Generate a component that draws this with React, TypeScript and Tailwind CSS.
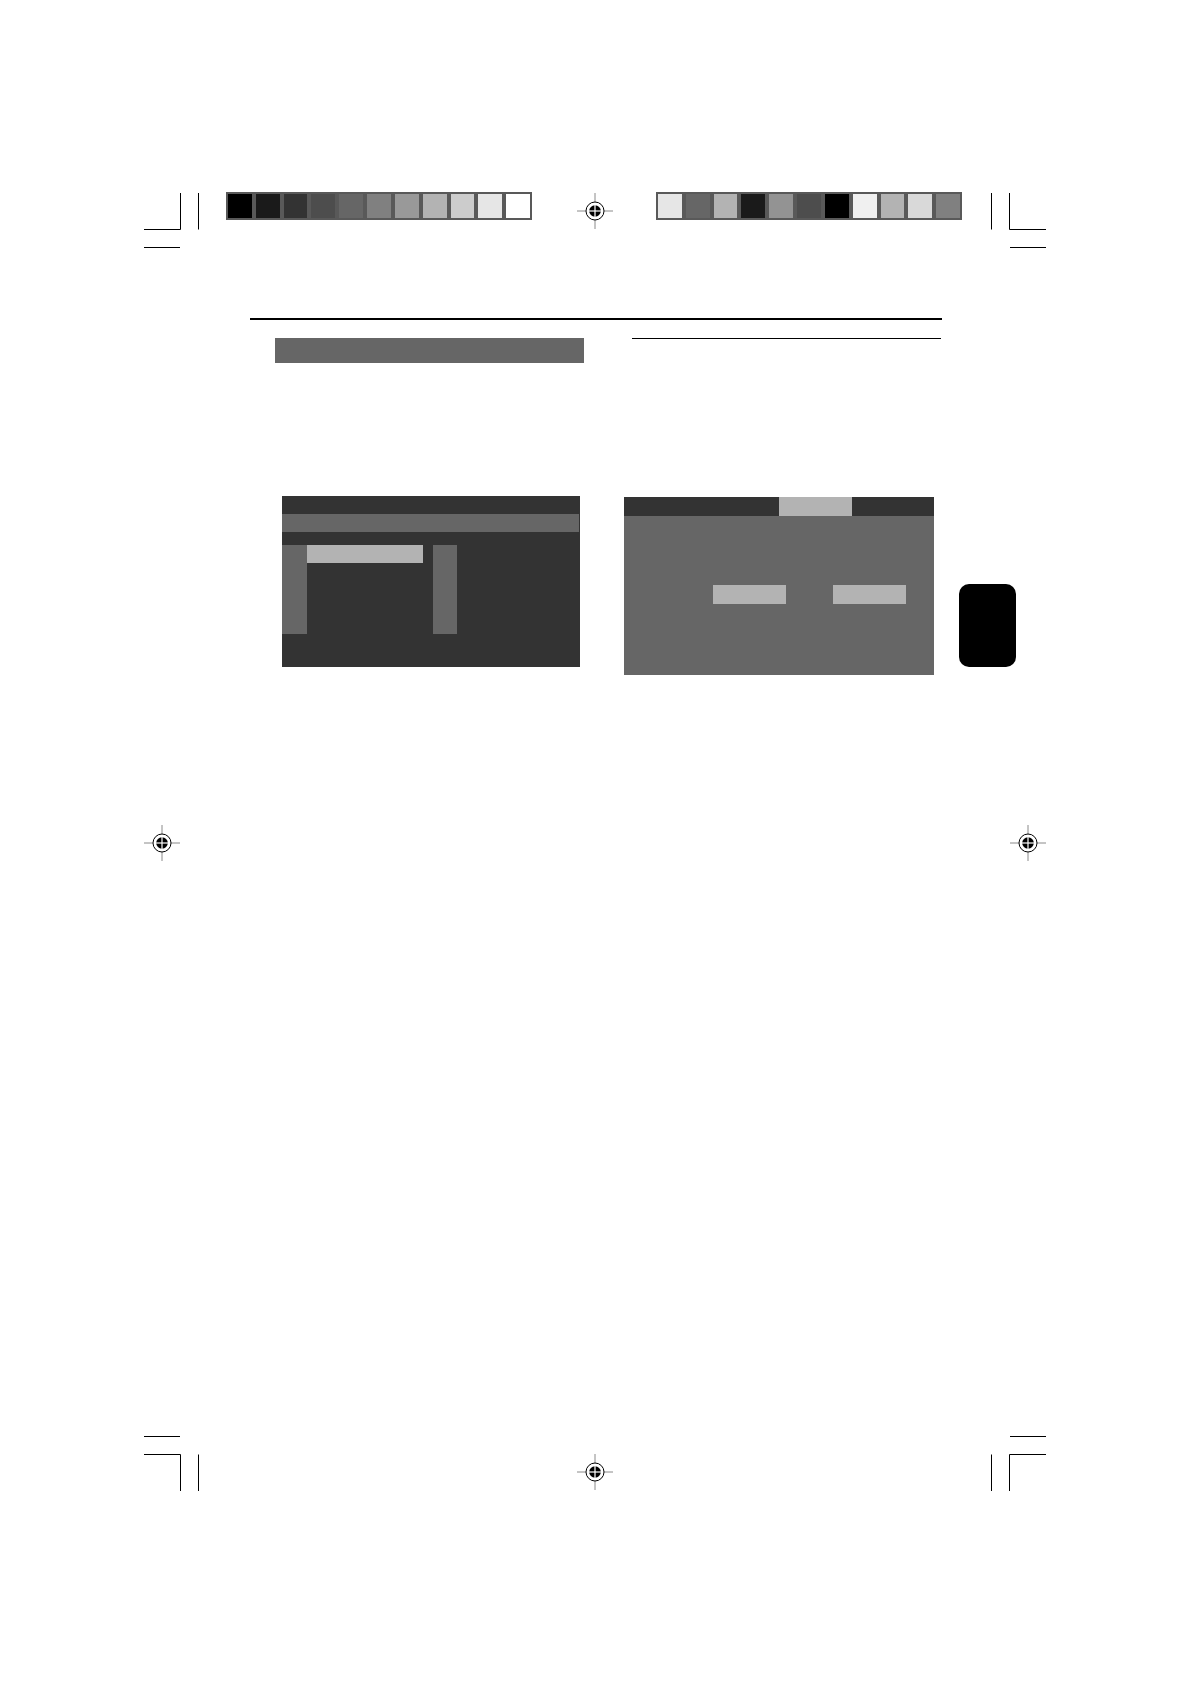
import React from "react";

const leftSwatches = [
  "bg-[#000000]",
  "bg-[#1a1a1a]",
  "bg-[#333333]",
  "bg-[#4d4d4d]",
  "bg-[#666666]",
  "bg-[#808080]",
  "bg-[#999999]",
  "bg-[#b3b3b3]",
  "bg-[#cccccc]",
  "bg-[#e6e6e6]",
  "bg-[#ffffff]",
];

const rightSwatches = [
  "bg-[#e6e6e6]",
  "bg-[#666666]",
  "bg-[#b3b3b3]",
  "bg-[#1a1a1a]",
  "bg-[#939393]",
  "bg-[#4d4d4d]",
  "bg-[#000000]",
  "bg-[#f0f0f0]",
  "bg-[#b3b3b3]",
  "bg-[#d9d9d9]",
  "bg-[#808080]",
];

function ColorBar({ swatches }: { swatches: string[] }) {
  return (
    <div className="w-[306px] h-[28px] p-[2px] bg-[#595959] grid grid-cols-11 gap-[4px] shrink-0">
      {swatches.map((c, i) => (
        <div key={i} className={c} />
      ))}
    </div>
  );
}

function RegMark() {
  return (
    <svg width="38" height="38" viewBox="0 0 38 38" className="shrink-0 block">
      <line x1="1" y1="19" x2="37" y2="19" stroke="#8a8a8a" strokeWidth="1" />
      <line x1="19" y1="1" x2="19" y2="37" stroke="#8a8a8a" strokeWidth="1" />
      <circle cx="19" cy="19" r="9" fill="#fff" stroke="#000" strokeWidth="1" />
      <circle cx="19" cy="19" r="5.8" fill="#000" />
      <line x1="13" y1="19" x2="25" y2="19" stroke="#fff" strokeWidth="1.2" />
      <line x1="19" y1="13" x2="19" y2="25" stroke="#fff" strokeWidth="1.2" />
    </svg>
  );
}

// crop marks; "top" marks sit above the trim, "bottom" ones below
function CropMark({ side, pos }: { side: "left" | "right"; pos: "top" | "bottom" }) {
  const flipX = side === "right" ? "scale(-1,1) translate(-56,0)" : "";
  const flipY = pos === "bottom" ? "scale(1,-1) translate(0,-56)" : "";
  return (
    <svg width="56" height="56" viewBox="0 0 56 56" className="shrink-0 block">
      <g transform={`${flipX} ${flipY}`} stroke="#000" strokeWidth="1" fill="none">
        <path d="M0 37.5 H36.5 V1" />
        <path d="M0 55.5 H36" />
        <path d="M54.5 1 V37.5" />
      </g>
    </svg>
  );
}

function ListPanel() {
  return (
    <div className="w-[298px] h-[171px] bg-[#333333] flex flex-col shrink-0">
      <div className="h-[18px]" />
      <div className="h-[18px] mr-[1px] bg-[#666666]" />
      <div className="h-[13px]" />
      <div className="h-[89px] flex items-start">
        <div className="w-[25px] h-full bg-[#666666]" />
        <div className="w-[116px] h-[18px] bg-[#b3b3b3]" />
        <div className="w-[24px] h-full ml-[10px] bg-[#666666]" />
      </div>
    </div>
  );
}

function SetupPanel() {
  return (
    <div className="w-[310px] h-[178px] mt-[1px] bg-[#666666] flex flex-col shrink-0">
      <div className="h-[19px] bg-[#333333] flex">
        <div className="w-[73px] h-full ml-[155px] bg-[#b3b3b3]" />
      </div>
      <div className="flex mt-[69px]">
        <div className="w-[73px] h-[19px] ml-[89px] bg-[#b3b3b3]" />
        <div className="w-[73px] h-[19px] ml-[47px] bg-[#b3b3b3]" />
      </div>
    </div>
  );
}

export default function App() {
  return (
    <div className="w-[1190px] h-[1684px] bg-white flex flex-col overflow-hidden">
      {/* top marks */}
      <div className="mt-[192px] flex items-start pl-[144px]">
        <CropMark side="left" pos="top" />
        <div className="ml-[26px]">
          <ColorBar swatches={leftSwatches} />
        </div>
        <div className="ml-[44px]">
          <RegMark />
        </div>
        <div className="ml-[42px]">
          <ColorBar swatches={rightSwatches} />
        </div>
        <div className="ml-[28px]">
          <CropMark side="right" pos="top" />
        </div>
      </div>

      {/* heading rule */}
      <div className="mt-[70px] ml-[250px] w-[692px] h-[2px] bg-black" />

      <div className="mt-[18px] flex items-start pl-[275px]">
        <div className="w-[309px] h-[25px] bg-[#666666]" />
        <div className="ml-[48px] w-[309px] h-[1px] bg-black" />
      </div>

      {/* screens */}
      <div className="mt-[133px] flex items-start pl-[282px]">
        <ListPanel />
        <div className="ml-[44px]">
          <SetupPanel />
        </div>
        <div className="ml-[25px] mt-[88px] w-[57px] h-[83px] bg-black rounded-[10px]" />
      </div>

      {/* middle marks */}
      <div className="mt-[149px] flex justify-between px-[143px]">
        <RegMark />
        <RegMark />
      </div>

      {/* bottom marks */}
      <div className="mt-[574px] flex items-start pl-[144px]">
        <CropMark side="left" pos="bottom" />
        <div className="ml-[376px] mt-[17px]">
          <RegMark />
        </div>
        <div className="ml-[376px]">
          <CropMark side="right" pos="bottom" />
        </div>
      </div>
    </div>
  );
}
